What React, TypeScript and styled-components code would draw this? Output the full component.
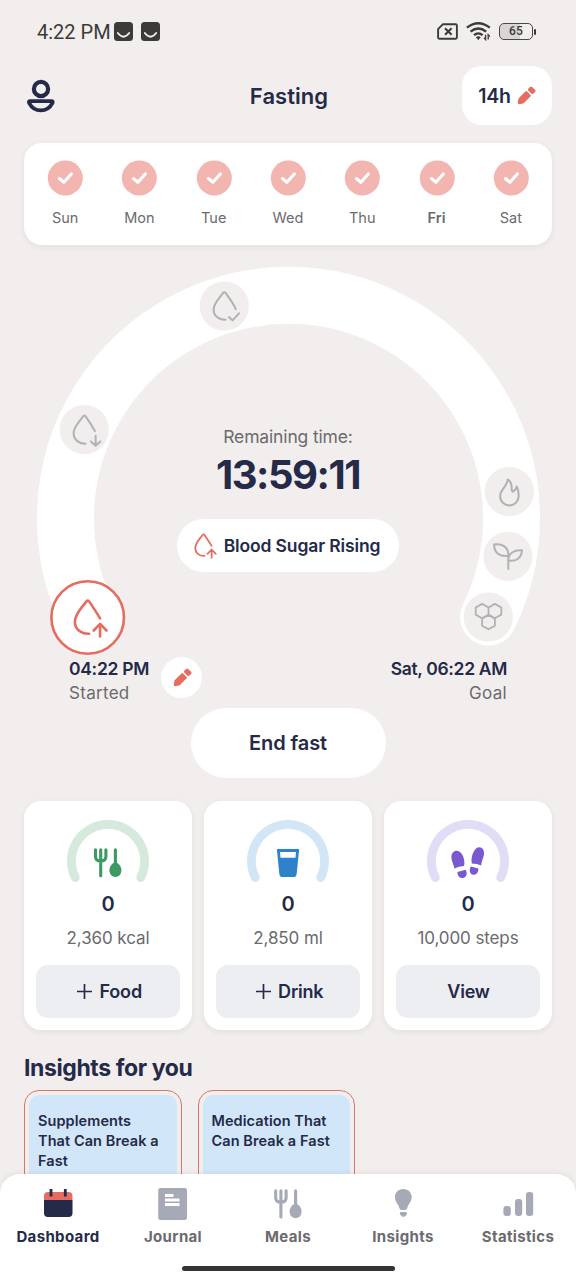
import React from "react";
import styled, { createGlobalStyle } from "styled-components";

const navy = "#242a48";
const grey = "#6b6a6e";
const coral = "#e56c5e";
const pale = "#f2eeed";
const iconGrey = "#b2b1b5";
const navGrey = "#a6a9b6";

const GlobalStyle = createGlobalStyle`
  * { box-sizing: border-box; }
  html, body { margin: 0; background: ${pale}; }
  body { font-family: Inter, "Liberation Sans", sans-serif; color: ${navy}; }
  button { font: inherit; color: inherit; border: 0; padding: 0; }
  svg { display: block; flex: none; }
`;

const Screen = styled.div`
  position: relative;
  display: flex;
  flex-direction: column;
  width: 576px;
  height: 1280px;
  overflow: hidden;
  background: ${pale};
`;

const Label = styled.span<{ $size: number; $weight?: number; $color?: string; $track?: number; $line?: number }>`
  font-size: ${(p) => p.$size}px;
  font-weight: ${(p) => p.$weight ?? 400};
  color: ${(p) => p.$color ?? navy};
  letter-spacing: ${(p) => p.$track ?? 0}px;
  line-height: ${(p) => p.$line ?? 24}px;
  white-space: nowrap;
`;

const StatusBar = styled.div`
  display: flex;
  align-items: center;
  justify-content: space-between;
  height: 63px;
  padding: 0 40px 0 37px;
`;

const StatusGroup = styled.div<{ $gap: number }>`
  display: flex;
  align-items: center;
  gap: ${(p) => p.$gap}px;
`;

const Clock = styled.span`
  font-family: Roboto, sans-serif;
  font-size: 20px;
  line-height: 24px;
  color: #3c3b39;
  margin-right: -4px;
`;

const Header = styled.header`
  display: grid;
  grid-template-columns: 1fr auto 1fr;
  align-items: center;
  height: 65px;
  padding: 0 24px 0 26px;
`;

const DurationButton = styled.button`
  display: flex;
  align-items: center;
  justify-content: center;
  justify-self: end;
  gap: 5px;
  width: 90px;
  height: 59px;
  border-radius: 20px;
  background: #fff;
`;

const WeekCard = styled.section`
  display: flex;
  height: 102px;
  margin: 15px 24px 0;
  padding: 16.5px 4px 0;
  border-radius: 18px;
  background: #fff;
  box-shadow: 0 2px 6px rgba(60, 40, 40, 0.07);
`;

const Day = styled.div`
  display: flex;
  flex: 1;
  flex-direction: column;
  align-items: center;
  gap: 10px;
`;

const Dial = styled.section`
  display: grid;
  grid-template-columns: 576px;
  height: 412px;
  margin-top: 12px;
  > * { grid-area: 1 / 1; }
`;

const Readout = styled.div`
  display: flex;
  flex-direction: column;
  align-items: center;
  padding-top: 168px;
`;

const StagePill = styled.div`
  display: flex;
  align-items: center;
  justify-content: center;
  gap: 6px;
  width: 222px;
  height: 53px;
  margin-top: 18px;
  padding-right: 3px;
  border-radius: 27px;
  background: #fff;
`;

const Times = styled.section`
  display: flex;
  justify-content: space-between;
  height: 50.5px;
  margin-top: -12px;
  padding: 0 69px;
`;

const TimeBlock = styled.div<{ $end?: boolean }>`
  display: flex;
  flex-direction: column;
  align-items: ${(p) => (p.$end ? "flex-end" : "flex-start")};
`;

const StartRow = styled.div`
  display: flex;
  align-items: flex-start;
  gap: 12px;
`;

const RoundButton = styled.button`
  display: grid;
  place-items: center;
  width: 41px;
  height: 41px;
  border-radius: 50%;
  background: #fff;
`;

const EndButton = styled.button`
  align-self: center;
  width: 195px;
  height: 70px;
  border-radius: 35px;
  background: #fff;
`;

const Trackers = styled.section`
  display: grid;
  grid-template-columns: repeat(3, 1fr);
  gap: 12px;
  padding: 23.5px 24px 0;
`;

const TrackerCard = styled.article`
  display: flex;
  flex-direction: column;
  align-items: center;
  height: 229px;
  padding: 17px 12px 12px;
  border-radius: 17px;
  background: #fff;
  box-shadow: 0 2px 6px rgba(60, 40, 40, 0.07);
`;

const Goal = styled.div`
  display: flex;
  margin-top: 6px;
`;

const TrackerButton = styled.button<{ $plus: boolean }>`
  display: flex;
  align-items: center;
  justify-content: center;
  gap: 7.5px;
  width: 100%;
  height: 53px;
  margin-top: auto;
  padding-left: ${(p) => (p.$plus ? 3 : 1)}px;
  border-radius: 12px;
  background: #edeef2;
`;

const Insights = styled.section`
  display: flex;
  flex-direction: column;
  gap: 8px;
  padding: 24px 24px 0;
`;

const InsightList = styled.div`
  display: flex;
  gap: 16px;
`;

const InsightFrame = styled.article`
  width: 157.5px;
  height: 190px;
  padding: 4px;
  border: 1.6px solid #d4776b;
  border-radius: 15px;
`;

const InsightBody = styled.div`
  height: 100%;
  padding: 15.5px 9px;
  border-radius: 10px;
  background: #d2e6f9;
  font-size: 14.5px;
  font-weight: 600;
  letter-spacing: 0.08px;
  line-height: 20.2px;
  white-space: pre;
`;

const TabBar = styled.nav`
  position: absolute;
  inset: auto 0 0;
  height: 106px;
  border-radius: 20px 20px 0 0;
  background: #fff;
  box-shadow: 0 -1px 5px rgba(60, 40, 40, 0.08);
`;

const Tabs = styled.div`
  display: grid;
  grid-template-columns: repeat(5, 115px);
  justify-content: center;
  height: 92px;
  padding-top: 12px;
`;

const Tab = styled.div`
  display: flex;
  flex-direction: column;
  align-items: center;
  gap: 5px;
`;

const HomeIndicator = styled.div`
  width: 213px;
  height: 5px;
  margin: 0 auto;
  border-radius: 3px;
  background: #343435;
`;

const FaceBadge = () => (
  <svg width="19" height="19" viewBox="0 0 19 19">
    <rect width="19" height="19" rx="3.5" fill="#3c3b39" />
    <path d="M3.8 11Q9.5 18.5 15.2 11" fill="none" stroke={pale} strokeWidth="1.8" strokeLinecap="round" />
  </svg>
);

const SimIcon = () => (
  <svg width="21" height="17" viewBox="0 0 21 17" fill="none" stroke="#3c3b39">
    <path d="M6 1.2H18.7Q19.9 1.2 19.9 2.4V14.6Q19.9 15.8 18.7 15.8H2.3Q1.1 15.8 1.1 14.6V6.2Z" strokeWidth="1.9" strokeLinejoin="round" />
    <path d="M8 5.3L14.6 11.8M14.6 5.3L8 11.8" strokeWidth="2.1" />
  </svg>
);

const WifiIcon = () => (
  <svg width="25" height="19" viewBox="0 0 25 19" fill="none" stroke="#3c3b39" strokeWidth="2.3">
    <path d="M.9 5.7Q12.3 -3.2 23.8 5.7M4.5 9.6Q12.3 3.3 20.2 9.6M8 13.2Q12.3 9.5 16.6 13.2" />
    <path d="M9.8 15.2Q12.3 13.4 14.8 15.2L12.3 18Z" fill="#3c3b39" stroke="none" />
    <path d="M19.6 12.8V17.6L18 15.8M22.2 17.6V12.8L23.8 14.6" strokeWidth="1.3" />
  </svg>
);

const BatteryShell = styled.div`
  display: flex;
  align-items: center;
  &::after {
    content: "";
    width: 2px;
    height: 6px;
    margin-left: 1px;
    border-radius: 1px;
    background: #3c3b39;
  }
`;

const BatteryBody = styled.div`
  width: 34px;
  height: 17px;
  border: 1.5px solid #4a4947;
  border-radius: 5px;
  background: linear-gradient(90deg, #d8d5d4 0 62%, transparent 62%);
  font: 500 12px/14px Roboto, sans-serif;
  letter-spacing: 0.3px;
  color: #3c3b39;
  text-align: center;
`;

const ProfileIcon = () => (
  <svg width="30" height="34" viewBox="0 0 30 34" fill="none" stroke={navy} strokeWidth="4.2">
    <circle cx="15" cy="10" r="7.1" />
    <path d="M4.2 22.2H25.4Q27.4 22.2 26.4 24.1C24 28.6 20 31.4 14.8 31.4S5.6 28.6 3.2 24.1Q2.2 22.2 4.2 22.2Z" strokeWidth="3.8" />
  </svg>
);

const PencilIcon = () => (
  <svg width="20" height="20" viewBox="-10.8 -10.8 21.6 21.6" fill={coral}>
    <g transform="rotate(-45)">
      <path d="M-11.5 -1.2L-7.4 -3.8H3.4Q4.2 -3.8 4.2 -3V3Q4.2 3.8 3.4 3.8H-7.4L-11.5 1.2Q-12.3 0 -11.5 -1.2Z" />
      <rect x="6" y="-3.8" width="5.6" height="7.6" rx="1.6" />
    </g>
  </svg>
);

const CheckIcon = () => (
  <svg width="36" height="36" viewBox="0 0 36 36">
    <circle cx="18.3" cy="18" r="17.5" fill="#f3b5af" />
    <path d="M12.4 18.6L16.9 22.3L24.3 14" fill="none" stroke="#fff" strokeWidth="3.2" strokeLinecap="round" strokeLinejoin="round" />
  </svg>
);

const dropShape = "M12.3 .8C9.5 -4 5.2 -10.5 1.8 -15.6Q0 -18.2 -1.8 -15.6C-6 -9.5 -12.8 -3.5 -12.8 4.2C-12.8 11.5 -7 16.4 1.4 16.2";
const arrowUp = "M12.4 19V6.6M6 13L12.4 6.4L18.8 13";

const hexagon = (x: number, y: number) =>
  `M${x} ${y - 7.1}l6.4 3.6v7.1l-6.4 3.6l-6.4 -3.6v-7.1z`;

const Node = ({ x, y, children }: { x: number; y: number; children: React.ReactNode }) => (
  <g transform={`translate(${x} ${y})`}>
    <circle r="24.6" fill={pale} stroke="none" />
    {children}
  </g>
);

const FastingRing = () => (
  <svg width="576" height="412" viewBox="0 257 576 412" fill="none" strokeLinecap="round" strokeLinejoin="round">
    <path d="M88.5 617A223 223 0 1 1 488.5 617" stroke="#fff" strokeWidth="57" />
    <g stroke={iconGrey} strokeWidth="2">
      <Node x={224.3} y={306}>
        <path transform="scale(.82)" strokeWidth="2.5" d="M14 4C12 -2 5.5 -10.5 1.8 -15.6Q0 -18 -1.8 -15.6C-6 -9.5 -13 -3.5 -13 4.2C-13 12 -7 17 1.4 16.8M5.6 13.5L10 17.5L18 9" />
      </Node>
      <Node x={84.3} y={429.5}>
        <path transform="scale(.82)" strokeWidth="2.5" d="M13 2C10 -3.5 5.5 -10.5 1.8 -15.6Q0 -18 -1.8 -15.6C-6 -9.5 -13 -3.5 -13 4.2C-13 12 -7 17.5 1.6 17.3M13.8 7.5V19.5M8 14.5L13.8 19.7L19.5 14.5" />
      </Node>
      <Node x={509.3} y={491.5}>
        <path d="M-1.7 -12C-1.3 -6 -9.2 -2 -9.2 4.5C-9.2 10 -5 13.9 .2 13.9S9.4 9.6 9.4 4.4C9.4 .8 8.8 -2.2 7.5 -5C6.6 -2 5.2 -.4 3.2 .2C.8 -1.5 4.8 -8.6 -1.7 -12Z" />
      </Node>
      <Node x={508} y={556.3}>
        <path d="M-14 -11.7C-6 -13 .8 -9.5 .3 -.4C-8.5 .8 -13.5 -3.5 -14 -11.7ZM14 -6C6 -6.6 .3 -3 .3 4.2C8.5 5.5 13.3 1.5 14 -6ZM.3 -.4V12.7" />
      </Node>
      <Node x={488.3} y={617}>
        <path d={hexagon(-6.2, -6) + hexagon(6.6, -6) + hexagon(0.2, 5.1)} strokeWidth="1.8" />
      </Node>
    </g>
    <g transform="translate(87.7 617.5)" stroke={coral}>
      <circle r="36.3" fill="#fff" strokeWidth="2.6" />
      <path d={dropShape + arrowUp} strokeWidth="2.6" />
    </g>
  </svg>
);

const RisingIcon = () => (
  <svg width="25" height="26" viewBox="-15 -19 36 40" fill="none" stroke={coral} strokeWidth="2.7" strokeLinecap="round" strokeLinejoin="round">
    <path d={dropShape + arrowUp} />
  </svg>
);

const Cutlery = () => (
  <>
    <path d="M-12.5 -11.3V-4.5Q-12.5 0 -7.3 0T-2.1 -4.5V-11.3M-7.3 -11.3V14.7M7.4 -11.3V6" fill="none" stroke="currentColor" strokeWidth="3.1" strokeLinecap="round" />
    <path d="M7.4 1.5C10.5 1.5 13.4 5.5 13.4 9.3C13.4 13.5 10.4 16 7.4 16S1.4 13.5 1.4 9.3C1.4 5.5 4.3 1.5 7.4 1.5Z" fill="currentColor" />
  </>
);

const Glass = () => (
  <path fillRule="evenodd" fill="currentColor" d="M-10.2 -12H10.2Q11.2 -12 11.1 -11L8.6 13.2Q8.3 16 5.4 16H-5.4Q-8.3 16 -8.6 13.2L-11.1 -11Q-11.2 -12 -10.2 -12ZM-8 -9L-7.5 -3.2H7.5L8 -9Z" />
);

const Footprints = () => (
  <g fill="currentColor">
    <path d="M-13.6 7.6C-14 3.4 -16.6 .6 -16.6 -4C-16.6 -8.5 -13.6 -10.5 -11 -10.3C-6 -10 -3.2 -2.5 -3.6 3.2L-4.2 5Q-9.6 5.2 -13.6 7.6Z" />
    <path d="M-10.6 11L-2.4 8.8C-.4 12.2 -1.2 16 -4.8 16.9C-8.2 17.7 -10.4 15.2 -10.6 11Z" />
    <path d="M3.8 2.4C3 -2.4 4 -6 5.8 -9.4C7.4 -12.4 9.2 -13.8 11.4 -13.7C14.4 -13.5 16.4 -11 16 -7C15.5 -2.5 13.6 -.4 13.2 4.6Q9 2.4 3.8 2.4Z" />
    <path d="M2.8 5.4L10.4 7.6C10.6 11.6 8.2 14.2 5.2 13.7C1.6 13 .8 9 2.8 5.4Z" />
  </g>
);

const Gauge = ({ track, tint, children }: { track: string; tint: string; children: React.ReactNode }) => (
  <svg width="90" height="70" viewBox="-45 -43 90 70" color={tint}>
    <path d="M-32.7 16.5A36.6 36.6 0 1 1 32.7 16.5" fill="none" stroke={track} strokeWidth="8.8" strokeLinecap="round" />
    {children}
  </svg>
);

const PlusIcon = () => (
  <svg width="15" height="15" viewBox="0 0 15 15" stroke={navy} strokeWidth="1.7">
    <path d="M7.5 0V15M0 7.5H15" />
  </svg>
);

const TabIcon = ({ children }: { children: React.ReactNode }) => (
  <svg width="34" height="36" viewBox="0 0 34 36" color={navGrey} fill="currentColor">{children}</svg>
);

const CalendarIcon = () => (
  <TabIcon>
    <path d="M3 14V10Q3 6 7 6H27.5Q31.5 6 31.5 10V14Z" fill={coral} />
    <path d="M3 14H31.5V27Q31.5 31 27.5 31H7Q3 31 3 27Z" fill={navy} />
    <path d="M10 3V10.5M24.3 3V10.5" stroke={navy} strokeWidth="2.8" />
  </TabIcon>
);

const JournalIcon = () => (
  <TabIcon>
    <rect x="2.2" y="2" width="28.8" height="32" rx="2.2" />
    <path d="M9 9.6H17.5M9 14H23.5M9 18.5H23.5" stroke="#fff" strokeWidth="3" />
  </TabIcon>
);

const MealsIcon = () => (
  <TabIcon>
    <g transform="translate(17.2 16.2)"><Cutlery /></g>
  </TabIcon>
);

const BulbIcon = () => (
  <TabIcon>
    <path d="M17.3 3C22 3 25.7 6.6 25.7 11C25.7 14.4 23.7 16.8 22.3 19.2C21.2 21.2 21.2 24 18.8 24H15.8C13.4 24 13.4 21.2 12.3 19.2C10.9 16.8 8.9 14.4 8.9 11C8.9 6.6 12.6 3 17.3 3Z" />
    <path d="M14.6 26H20.2Q21.5 26.7 20.7 28.2Q19.7 31 17.4 31T14.1 28.2Q13.3 26.7 14.6 26Z" />
  </TabIcon>
);

const StatsIcon = () => (
  <TabIcon>
    <rect x="2.4" y="20" width="7.4" height="10" rx="3" />
    <rect x="14" y="13" width="7.2" height="17" rx="3" />
    <rect x="25" y="6" width="7.2" height="24" rx="3" />
  </TabIcon>
);

const days = ["Sun", "Mon", "Tue", "Wed", "Thu", "Fri", "Sat"];

const trackers = [
  { goal: "2,360 kcal", action: "Food", plus: true, track: "#d5e9dd", tint: "#3b9b62", icon: <Cutlery /> },
  { goal: "2,850 ml", action: "Drink", plus: true, track: "#d3e6f6", tint: "#2d82cb", icon: <Glass /> },
  { goal: "10,000 steps", action: "View", plus: false, track: "#e2dcf6", tint: "#7958d2", icon: <Footprints /> },
];

const tabs = [
  { name: "Dashboard", icon: <CalendarIcon /> },
  { name: "Journal", icon: <JournalIcon /> },
  { name: "Meals", icon: <MealsIcon /> },
  { name: "Insights", icon: <BulbIcon /> },
  { name: "Statistics", icon: <StatsIcon /> },
];

export default function App() {
  return (
    <Screen>
      <GlobalStyle />
      <StatusBar>
        <StatusGroup $gap={7.5}>
          <Clock>4:22 PM</Clock>
          <FaceBadge />
          <FaceBadge />
        </StatusGroup>
        <StatusGroup $gap={8}>
          <SimIcon />
          <WifiIcon />
          <BatteryShell><BatteryBody>65</BatteryBody></BatteryShell>
        </StatusGroup>
      </StatusBar>

      <Header>
        <ProfileIcon />
        <Label $size={22} $weight={600} $track={0.05}>Fasting</Label>
        <DurationButton>
          <Label $size={19.5} $weight={600} $track={-0.3}>14h</Label>
          <PencilIcon />
        </DurationButton>
      </Header>

      <WeekCard>
        {days.map((day) => (
          <Day key={day}>
            <CheckIcon />
            <Label $size={14.5} $weight={day === "Fri" ? 600 : 400} $color={grey}>{day}</Label>
          </Day>
        ))}
      </WeekCard>

      <Dial>
        <FastingRing />
        <Readout>
          <Label $size={17.5} $color={grey} $track={-0.15}>Remaining time:</Label>
          <Label $size={40} $weight={700} $track={-1.45} $line={52}>13:59:11</Label>
          <StagePill>
            <RisingIcon />
            <Label $size={17.5} $weight={600} $track={-0.13}>Blood Sugar Rising</Label>
          </StagePill>
        </Readout>
      </Dial>

      <Times>
        <StartRow>
          <TimeBlock>
            <Label $size={17.5} $weight={600} $track={-0.3}>04:22 PM</Label>
            <Label $size={17} $color={grey} $track={0.3}>Started</Label>
          </TimeBlock>
          <RoundButton><PencilIcon /></RoundButton>
        </StartRow>
        <TimeBlock $end>
          <Label $size={17.5} $weight={600} $track={-0.33}>Sat, 06:22 AM</Label>
          <Label $size={17} $color={grey} $track={0.3}>Goal</Label>
        </TimeBlock>
      </Times>

      <EndButton><Label $size={20} $weight={600} $track={-0.1}>End fast</Label></EndButton>

      <Trackers>
        {trackers.map((t) => (
          <TrackerCard key={t.action}>
            <Gauge track={t.track} tint={t.tint}>{t.icon}</Gauge>
            <Label $size={20} $weight={600} $line={32}>0</Label>
            <Goal><Label $size={17} $color={grey} $track={-0.1}>{t.goal}</Label></Goal>
            <TrackerButton $plus={t.plus}>
              {t.plus && <PlusIcon />}
              <Label $size={18} $weight={600} $track={-0.2}>{t.action}</Label>
            </TrackerButton>
          </TrackerCard>
        ))}
      </Trackers>

      <Insights>
        <Label $size={23} $weight={700} $track={-0.4} $line={28}>Insights for you</Label>
        <InsightList>
          <InsightFrame><InsightBody>{"Supplements\nThat Can Break a\nFast"}</InsightBody></InsightFrame>
          <InsightFrame><InsightBody>{"Medication That\nCan Break a Fast"}</InsightBody></InsightFrame>
        </InsightList>
      </Insights>

      <TabBar>
        <Tabs>
          {tabs.map((tab, i) => (
            <Tab key={tab.name}>
              {tab.icon}
              <Label $size={15} $weight={700} $color={i === 0 ? navy : grey} $track={0.35} $line={20}>{tab.name}</Label>
            </Tab>
          ))}
        </Tabs>
        <HomeIndicator />
      </TabBar>
    </Screen>
  );
}
